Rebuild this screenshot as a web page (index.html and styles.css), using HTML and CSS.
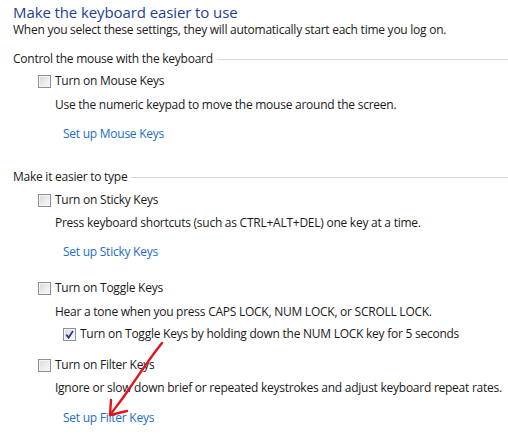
FILE: index.html
```html
<!DOCTYPE html>
<html>
<head>
<meta charset="utf-8">
<link rel="stylesheet" href="styles.css">
</head>
<body>
<div class="page">
  <h1 class="title">Make the keyboard easier to use</h1>
  <p class="intro">When you select these settings, they will automatically start each time you log on.</p>

  <section class="group g-mouse">
    <div class="group-head"><span>Control the mouse with the keyboard</span><span class="rule"></span></div>
    <label class="check r-mouse"><span class="box"></span>Turn on Mouse Keys</label>
    <p class="desc d-mouse">Use the numeric keypad to move the mouse around the screen.</p>
    <a class="link l-mouse" href="#">Set up Mouse Keys</a>
  </section>

  <section class="group g-type">
    <div class="group-head"><span>Make it easier to type</span><span class="rule"></span></div>
    <label class="check r-sticky"><span class="box"></span>Turn on Sticky Keys</label>
    <p class="desc d-sticky">Press keyboard shortcuts (such as CTRL+ALT+DEL) one key at a time.</p>
    <a class="link l-sticky" href="#">Set up Sticky Keys</a>

    <label class="check r-toggle"><span class="box"></span>Turn on Toggle Keys</label>
    <p class="desc d-toggle">Hear a tone when you press CAPS LOCK, NUM LOCK, or SCROLL LOCK.</p>
    <label class="check sub r-sub"><span class="box checked"><svg viewBox="0 0 9 9" width="9" height="9"><path d="M1.2 4.6 L3.6 7.6 L8 1" fill="none" stroke="#2a3d94" stroke-width="1.8"/></svg></span>Turn on Toggle Keys by holding down the NUM LOCK key for 5 seconds</label>

    <label class="check r-filter"><span class="box"></span>Turn on Filter Keys</label>
    <p class="desc d-filter">Ignore or slow down brief or repeated keystrokes and adjust keyboard repeat rates.</p>
    <a class="link l-filter" href="#">Set up Filter Keys</a>
  </section>

  <svg class="arrow" width="508" height="445" viewBox="0 0 508 445">
    <path d="M162 343 C150 358 138 376 127 392 C121 401 115 408 110 415" fill="none" stroke="#e3141b" stroke-width="2.4" stroke-linecap="round"/>
    <path d="M111 400 L110 415 L127 411" fill="none" stroke="#e3141b" stroke-width="2.4" stroke-linecap="round" stroke-linejoin="round"/>
  </svg>
</div>
</body>
</html>
```
FILE: styles.css
```css
html, body {
  margin: 0;
  padding: 0;
  background: #ffffff;
}
body {
  width: 508px;
  height: 445px;
  overflow: hidden;
  font-family: "Open Sans", "Noto Sans", sans-serif;
  font-size: 12px;
  line-height: 16px;
  letter-spacing: -0.25px;
  color: #1a1a1a;
}
.page {
  position: relative;
  padding-top: 3px;
}
.title {
  margin: 0 0 0 13px;
  font-size: 15px;
  line-height: 19px;
  letter-spacing: -0.1px;
  font-weight: normal;
  color: #1f3f96;
}
.intro {
  margin: 0 0 0 13px;
}
.group-head {
  display: flex;
  align-items: center;
  margin-left: 13px;
}
.group-head .rule {
  flex: 1;
  height: 1px;
  background: #d5d5d5;
  margin-left: 4px;
}
.g-mouse { margin-top: 13px; }
.g-type { margin-top: 27px; }
.check {
  display: flex;
  align-items: flex-start;
  margin-left: 38px;
}
.check.sub { margin-left: 63px; }
.box {
  box-sizing: border-box;
  width: 13px;
  height: 13px;
  margin-top: 2px;
  margin-right: 4px;
  border: 1px solid #8f8f8f;
  background: linear-gradient(135deg, #d8d8d8 0%, #eeeeee 60%, #f8f8f8 100%);
  box-shadow: inset 0 0 0 1px #f4f4f4;
  display: flex;
  align-items: center;
  justify-content: center;
  flex: none;
}
.box svg { display: block; }
.desc {
  margin: 0 0 0 55px;
}
.link {
  display: block;
  margin-left: 63px;
  color: #1e6dc4;
  text-decoration: none;
}
.r-mouse { margin-top: 6px; }
.d-mouse { margin-top: 8px; }
.l-mouse { margin-top: 13px; }
.r-sticky { margin-top: 7px; }
.d-sticky { margin-top: 7px; }
.l-sticky { margin-top: 13px; }
.r-toggle { margin-top: 20px; }
.d-toggle { margin-top: 8px; }
.r-sub { margin-top: 6px; }
.r-filter { margin-top: 15px; }
.d-filter { margin-top: 7px; }
.l-filter { margin-top: 14px; }
.arrow {
  position: absolute;
  left: 0;
  top: 0;
  pointer-events: none;
}
```
